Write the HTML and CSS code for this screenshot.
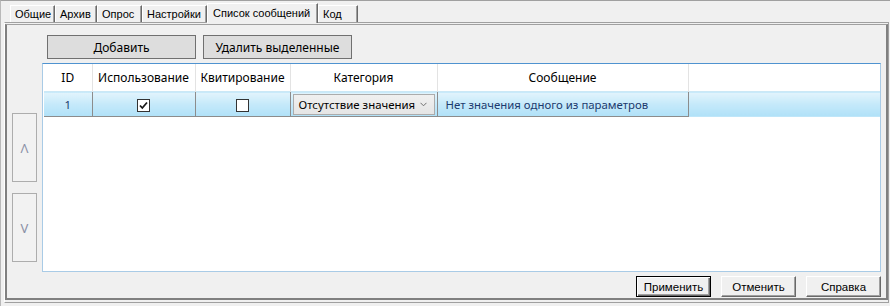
FILE: index.html
```html
<!DOCTYPE html>
<html lang="ru">
  <head>
    <meta charset="UTF-8">
    <title>Список сообщений</title>
    <link rel="stylesheet" href="styles.css">
  </head>
  <body>
    <div id="okno">
      <div id="vkladki">
        <div class="vkladka v-obshie">Общие</div>
        <div class="vkladka v-arhiv">Архив</div>
        <div class="vkladka v-opros">Опрос</div>
        <div class="vkladka v-nastroyki">Настройки</div>
        <div class="vkladka v-spisok aktivnaya">Список сообщений</div>
        <div class="vkladka v-kod">Код</div>
      </div>
      <div id="stranica">
        <div id="soderzhimoe">
          <div id="panel-knopok">
            <button class="wpf-btn">Добавить</button>
            <button class="wpf-btn">Удалить выделенные</button>
          </div>
          <div id="osnova">
            <div id="strelki">
              <button class="strelka">Λ</button>
              <button class="strelka">V</button>
            </div>
            <div id="setka">
              <table>
                <colgroup>
                  <col style="width: 48px">
                  <col style="width: 103px">
                  <col style="width: 95px">
                  <col style="width: 147px">
                  <col style="width: 251px">
                  <col>
                </colgroup>
                <thead>
                  <tr>
                    <th>ID</th>
                    <th>Использование</th>
                    <th>Квитирование</th>
                    <th>Категория</th>
                    <th>Сообщение</th>
                    <th class="pusto"></th>
                  </tr>
                </thead>
                <tbody>
                  <tr class="vybrano">
                    <td class="nomer">1</td>
                    <td class="centr">
                      <span class="flazhok">
                        <svg width="11" height="11" viewBox="0 0 11 11"><path d="M2 5.5 L4.3 8 L9 2.5" fill="none" stroke="#1a1a1a" stroke-width="1.8"/></svg>
                      </span>
                    </td>
                    <td class="centr"><span class="flazhok"></span></td>
                    <td class="kombo-yacheyka">
                      <div class="kombo">
                        <span>Отсутствие значения</span>
                        <svg width="7" height="5" viewBox="0 0 7 5"><path d="M0.5 0.8 L3.5 3.8 L6.5 0.8" fill="none" stroke="#707070" stroke-width="1"/></svg>
                      </div>
                    </td>
                    <td class="soobshenie">Нет значения одного из параметров</td>
                    <td class="pusto"></td>
                  </tr>
                </tbody>
              </table>
            </div>
          </div>
          <div id="niz">
            <button class="klassika po-umolchaniyu">Применить</button>
            <button class="klassika">Отменить</button>
            <button class="klassika">Справка</button>
          </div>
        </div>
      </div>
    </div>
  </body>
</html>
```

FILE: styles.css
```css
body {
  margin: 0;
  background-color: #f0f0f0;
  font-family: "Liberation Sans", Arial, sans-serif;
}
#okno {
  width: 890px;
  height: 306px;
  box-sizing: border-box;
  border-top: 1px solid #a0a0a0;
  border-left: 1px solid #b9b9b9;
  display: flex;
  flex-direction: column;
}
#vkladki {
  display: flex;
  align-items: flex-end;
  height: 21px;
  padding-left: 9px;
}
.vkladka {
  height: 17px;
  box-sizing: border-box;
  padding: 0 0 0 4px;
  font-size: 11px;
  line-height: 16px;
  color: #000;
  border-top: 1px solid #fff;
  border-left: 1px solid #fff;
  border-right: 1px solid #696969;
  box-shadow: inset -1px 0 0 #a0a0a0;
  white-space: nowrap;
}
.v-obshie { width: 45px; }
.v-arhiv { width: 42px; }
.v-opros { width: 45px; }
.v-nastroyki { width: 65px; }
.v-spisok { width: 111px; }
.v-kod { width: 40px; }
.vkladka.aktivnaya {
  height: 20px;
  padding: 1px 0 0 5px;
  line-height: 16px;
  margin-bottom: -1px;
  position: relative;
  background-color: #f0f0f0;
}
#stranica {
  flex: 1;
  margin: 0 1px 3px 3px;
  border-top: 1px solid #a0a0a0;
  border-left: 1px solid #fff;
  border-right: 1px solid #a0a0a0;
  border-bottom: 1px solid #a0a0a0;
  padding: 1px 0 2px 0;
  display: flex;
}
#soderzhimoe {
  flex: 1;
  border-left: 2px solid #808080;
  border-top: 1px solid #a0a0a0;
  border-right: 2px solid #808080;
  border-bottom: 2px solid #808080;
  padding: 10px 5px 0 5px;
  display: flex;
  flex-direction: column;
}
#panel-knopok {
  display: flex;
  gap: 7px;
  margin-left: 35px;
  margin-bottom: 4px;
}
.wpf-btn {
  height: 24px;
  width: 149px;
  background-color: #dddddd;
  border: 1px solid #707070;
  font-family: "Noto Sans", sans-serif;
  font-size: 12px;
  color: #000;
  padding: 0;
}
#osnova {
  display: flex;
  gap: 5px;
  height: 209px;
}
#strelki {
  width: 25px;
  padding-top: 50px;
  display: flex;
  flex-direction: column;
  gap: 11px;
}
.strelka {
  height: 69px;
  width: 25px;
  padding: 0;
  background-color: #f2f2f2;
  border: 1px solid #adadad;
  color: #8a90a6;
  font-family: "Noto Sans", sans-serif;
  font-size: 13px;
}
#setka {
  flex: 1;
  background-color: #fff;
  border: 1px solid #a9cbe6;
  border-top-color: #4f93d0;
  padding: 0 0 0 1px;
  overflow: hidden;
}
#setka table {
  width: 100%;
  border-collapse: collapse;
  table-layout: fixed;
  font-family: "Noto Sans", sans-serif;
  font-size: 12px;
}
#setka th {
  height: 27px;
  font-weight: normal;
  color: #000;
  border-right: 1px solid #e3e3e3;
  padding: 0;
  white-space: nowrap;
}
#setka th.pusto {
  border-right: none;
}
.vybrano td {
  height: 24px;
  padding: 0;
  font-size: 11.4px;
  border-top: 1px solid #cbe8f6;
  border-right: 1px solid #8c8c8c;
  border-bottom: 1px solid #8c8c8c;
  background: linear-gradient(#e3f4fc, #c5e9fa 50%, #b0e1f8);
  color: #1c3a6e;
  white-space: nowrap;
}
.vybrano td.pusto {
  border-right: none;
  border-bottom: 1px solid #bfe6f9;
}
.nomer {
  text-align: center;
}
.centr {
  text-align: center;
}
.flazhok {
  display: inline-block;
  width: 11px;
  height: 11px;
  background-color: #fff;
  border: 1px solid #333;
  vertical-align: middle;
}
.flazhok svg {
  display: block;
}
.kombo-yacheyka {
  padding: 0 2px !important;
}
.kombo {
  height: 21px;
  box-sizing: border-box;
  border: 1px solid #acacac;
  background: linear-gradient(#f0f0f0, #e5e5e5);
  display: flex;
  align-items: center;
  justify-content: space-between;
  padding: 0 7px 0 5px;
  color: #000;
}
.soobshenie {
  padding-left: 8px !important;
}
#niz {
  display: flex;
  justify-content: flex-end;
  gap: 10px;
  margin-top: 4px;
}
.klassika {
  width: 75px;
  height: 21px;
  padding: 0;
  background-color: #f0f0f0;
  border: 1px solid;
  border-color: #fff #696969 #696969 #fff;
  box-shadow: inset -1px -1px 0 #a0a0a0;
  font-family: "Liberation Sans", Arial, sans-serif;
  font-size: 11.5px;
  color: #000;
}
.klassika.po-umolchaniyu {
  border-color: #000;
  box-shadow: inset 1px 1px 0 #fff, inset -1px -1px 0 #696969, inset -2px -2px 0 #a0a0a0;
}
```
